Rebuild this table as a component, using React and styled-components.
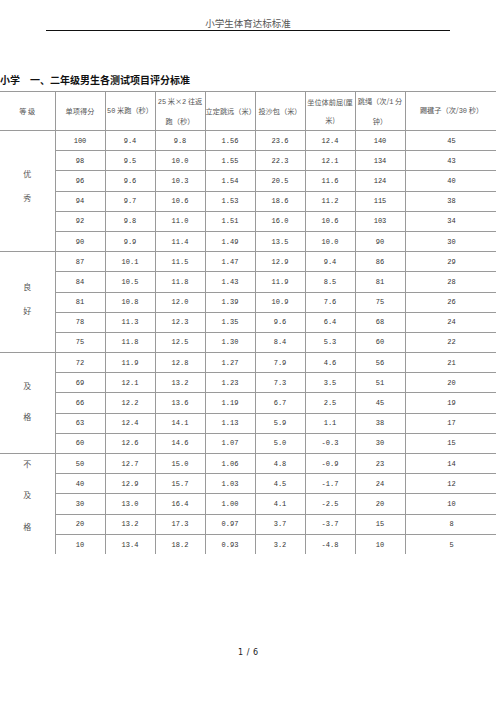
import React from "react";
import styled, { createGlobalStyle } from "styled-components";

const Global = createGlobalStyle`
  html, body { margin: 0; padding: 0; background: #fff; overflow: hidden; }
  body { font-family: "Noto Sans CJK SC", "Liberation Sans", sans-serif; }
`;

const Page = styled.div`
  width: 496px;
  height: 702px;
  display: flex;
  flex-direction: column;
  position: relative;
  overflow: hidden;
`;

const RunningHead = styled.div`
  margin: 0 auto;
  padding-top: 17px;
  width: 404px;
  text-align: center;
  font-size: 9.5px;
  line-height: 12px;
  color: #555;
  border-bottom: 1px solid #111;
  padding-bottom: 1px;
`;

const Title = styled.h1`
  margin: 42px 0 0 0;
  font-size: 10px;
  line-height: 14px;
  font-weight: bold;
  color: #111;
  white-space: pre;
`;

const Table = styled.table`
  margin-top: 4px;
  width: 498px;
  table-layout: fixed;
  border-collapse: collapse;
  color: #444;
`;

const HeadCell = styled.th`
  height: 38px;
  padding: 0;
  border: 1px solid #9a9a9a;
  border-left: ${(p) => (p.$first ? "none" : "1px solid #9a9a9a")};
  font-weight: normal;
  font-size: 7.2px;
  line-height: 18.5px;
  text-align: center;
  white-space: nowrap;
  color: #555;
  overflow: visible;
`;

const Num = styled.span`
  font-family: "Liberation Mono", monospace;
  font-size: 7px;
`;

const Row = styled.tr`
  height: 20.2px;
`;

const Cell = styled.td`
  padding: 0;
  border: 1px solid #9a9a9a;
  border-bottom: ${(p) => (p.$last ? "none" : "1px solid #9a9a9a")};
  text-align: center;
  font-family: "Liberation Mono", monospace;
  font-size: 7px;
  color: #333;
  line-height: 10px;
`;

const GradeCell = styled.td`
  padding: 0;
  border: 1px solid #9a9a9a;
  border-left: none;
  border-bottom: ${(p) => (p.$last ? "none" : "1px solid #9a9a9a")};
  vertical-align: middle;
  text-align: center;
`;

const GradeLabel = styled.div`
  display: flex;
  flex-direction: column;
  align-items: center;
  font-size: 8px;
  color: #555;
  line-height: ${(p) => p.$lh}px;
  transform: translateY(${(p) => p.$shift}px);
`;

const PageNum = styled.div`
  position: absolute;
  left: 0;
  right: 0;
  top: 648px;
  text-align: center;
  font-family: "DejaVu Sans", sans-serif;
  font-size: 8px;
  color: #222;
  word-spacing: 1px;
`;

const groups = [
  {
    label: ["优", "秀"],
    lh: 24,
    shift: -5,
    rows: [
      ["100", "9.4", "9.8", "1.56", "23.6", "12.4", "140", "45"],
      ["98", "9.5", "10.0", "1.55", "22.3", "12.1", "134", "43"],
      ["96", "9.6", "10.3", "1.54", "20.5", "11.6", "124", "40"],
      ["94", "9.7", "10.6", "1.53", "18.6", "11.2", "115", "38"],
      ["92", "9.8", "11.0", "1.51", "16.0", "10.6", "103", "34"],
      ["90", "9.9", "11.4", "1.49", "13.5", "10.0", "90", "30"],
    ],
  },
  {
    label: ["良", "好"],
    lh: 24.5,
    shift: -3,
    rows: [
      ["87", "10.1", "11.5", "1.47", "12.9", "9.4", "86", "29"],
      ["84", "10.5", "11.8", "1.43", "11.9", "8.5", "81", "28"],
      ["81", "10.8", "12.0", "1.39", "10.9", "7.6", "75", "26"],
      ["78", "11.3", "12.3", "1.35", "9.6", "6.4", "68", "24"],
      ["75", "11.8", "12.5", "1.30", "8.4", "5.3", "60", "22"],
    ],
  },
  {
    label: ["及", "格"],
    lh: 31,
    shift: -2,
    rows: [
      ["72", "11.9", "12.8", "1.27", "7.9", "4.6", "56", "21"],
      ["69", "12.1", "13.2", "1.23", "7.3", "3.5", "51", "20"],
      ["66", "12.2", "13.6", "1.19", "6.7", "2.5", "45", "19"],
      ["63", "12.4", "14.1", "1.13", "5.9", "1.1", "38", "17"],
      ["60", "12.6", "14.6", "1.07", "5.0", "-0.3", "30", "15"],
    ],
  },
  {
    label: ["不", "及", "格"],
    lh: 31.5,
    shift: -9,
    rows: [
      ["50", "12.7", "15.0", "1.06", "4.8", "-0.9", "23", "14"],
      ["40", "12.9", "15.7", "1.03", "4.5", "-1.7", "24", "12"],
      ["30", "13.0", "16.4", "1.00", "4.1", "-2.5", "20", "10"],
      ["20", "13.2", "17.3", "0.97", "3.7", "-3.7", "15", "8"],
      ["10", "13.4", "18.2", "0.93", "3.2", "-4.8", "10", "5"],
    ],
  },
];

const widths = [55, 50, 50, 50, 50, 50, 50, 50, 93];

export default function App() {
  return (
    <Page>
      <Global />
      <RunningHead>小学生体育达标标准</RunningHead>
      <Title>{"小学　一、二年级男生各测试项目评分标准"}</Title>
      <Table>
        <colgroup>
          {widths.map((w, i) => (
            <col key={i} style={{ width: w }} />
          ))}
        </colgroup>
        <thead>
          <tr>
            <HeadCell $first>等 级</HeadCell>
            <HeadCell>单项得分</HeadCell>
            <HeadCell>
              <Num>50</Num> 米跑（秒）
            </HeadCell>
            <HeadCell>
              <Num>25</Num> 米×<Num>2</Num> 往返
              <br />
              跑（秒）
            </HeadCell>
            <HeadCell>立定跳远（米）</HeadCell>
            <HeadCell>投沙包（米）</HeadCell>
            <HeadCell>
              坐位体前屈(厘
              <br />
              米)
            </HeadCell>
            <HeadCell>
              跳绳（次/<Num>1</Num> 分
              <br />
              钟）
            </HeadCell>
            <HeadCell>
              踢毽子（次/<Num>30</Num> 秒）
            </HeadCell>
          </tr>
        </thead>
        <tbody>
          {groups.map((g, gi) =>
            g.rows.map((r, ri) => {
              const last = gi === groups.length - 1 && ri === g.rows.length - 1;
              const lastGroup = gi === groups.length - 1;
              return (
                <Row key={`${gi}-${ri}`}>
                  {ri === 0 && (
                    <GradeCell rowSpan={g.rows.length} $last={lastGroup}>
                      <GradeLabel $lh={g.lh} $shift={g.shift}>
                        {g.label.map((c, ci) => (
                          <span key={ci}>{c}</span>
                        ))}
                      </GradeLabel>
                    </GradeCell>
                  )}
                  {r.map((v, vi) => (
                    <Cell key={vi} $last={last}>
                      {v}
                    </Cell>
                  ))}
                </Row>
              );
            })
          )}
        </tbody>
      </Table>
      <PageNum>1 / 6</PageNum>
    </Page>
  );
}
